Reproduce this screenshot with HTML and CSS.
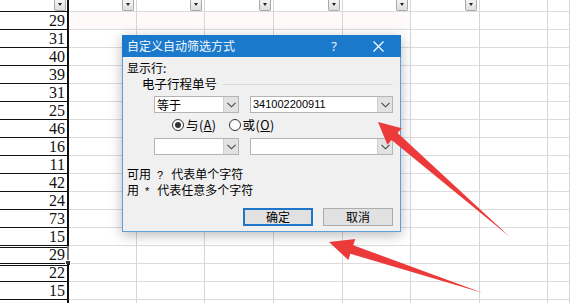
FILE: index.html
```html
<!DOCTYPE html>
<html lang="zh-CN">
<head>
<meta charset="utf-8">
<title>自定义自动筛选方式</title>
<link rel="stylesheet" href="styles.css">
</head>
<body>
<div class="sheet">
  <div class="row head">
    <div class="c n"><span class="fb"></span></div><div class="c"><span class="fb"></span></div><div class="c"><span class="fb"></span></div><div class="c"><span class="fb"></span></div><div class="c"><span class="fb"></span></div><div class="c"><span class="fb"></span></div><div class="c"><span class="fb"></span></div><div class="c"></div><div class="c"></div>
  </div>
  <div class="row"><div class="c n">29</div><div class="c tint"></div><div class="c tint"></div><div class="c tint"></div><div class="c tint"></div><div class="c tint"></div><div class="c"></div><div class="c"></div><div class="c"></div></div>
  <div class="row"><div class="c n">31</div><div class="c"></div><div class="c"></div><div class="c"></div><div class="c"></div><div class="c"></div><div class="c"></div><div class="c"></div><div class="c"></div></div>
  <div class="row"><div class="c n">40</div><div class="c"></div><div class="c"></div><div class="c"></div><div class="c"></div><div class="c"></div><div class="c"></div><div class="c"></div><div class="c"></div></div>
  <div class="row"><div class="c n">39</div><div class="c"></div><div class="c"></div><div class="c"></div><div class="c"></div><div class="c"></div><div class="c"></div><div class="c"></div><div class="c"></div></div>
  <div class="row"><div class="c n">31</div><div class="c"></div><div class="c"></div><div class="c"></div><div class="c"></div><div class="c"></div><div class="c"></div><div class="c"></div><div class="c"></div></div>
  <div class="row"><div class="c n">25</div><div class="c"></div><div class="c"></div><div class="c"></div><div class="c"></div><div class="c"></div><div class="c"></div><div class="c"></div><div class="c"></div></div>
  <div class="row"><div class="c n">46</div><div class="c"></div><div class="c"></div><div class="c"></div><div class="c"></div><div class="c"></div><div class="c"></div><div class="c"></div><div class="c"></div></div>
  <div class="row"><div class="c n">16</div><div class="c"></div><div class="c"></div><div class="c"></div><div class="c"></div><div class="c"></div><div class="c"></div><div class="c"></div><div class="c"></div></div>
  <div class="row"><div class="c n">11</div><div class="c"></div><div class="c"></div><div class="c"></div><div class="c"></div><div class="c"></div><div class="c"></div><div class="c"></div><div class="c"></div></div>
  <div class="row"><div class="c n">42</div><div class="c"></div><div class="c"></div><div class="c"></div><div class="c"></div><div class="c"></div><div class="c"></div><div class="c"></div><div class="c"></div></div>
  <div class="row"><div class="c n">24</div><div class="c"></div><div class="c"></div><div class="c"></div><div class="c"></div><div class="c"></div><div class="c"></div><div class="c"></div><div class="c"></div></div>
  <div class="row"><div class="c n">73</div><div class="c"></div><div class="c"></div><div class="c"></div><div class="c"></div><div class="c"></div><div class="c"></div><div class="c"></div><div class="c"></div></div>
  <div class="row"><div class="c n">15</div><div class="c"></div><div class="c"></div><div class="c"></div><div class="c"></div><div class="c"></div><div class="c"></div><div class="c"></div><div class="c"></div></div>
  <div class="row"><div class="c n sel">29<span class="handle"></span></div><div class="c"></div><div class="c"></div><div class="c"></div><div class="c"></div><div class="c"></div><div class="c"></div><div class="c"></div><div class="c"></div></div>
  <div class="row"><div class="c n after">22</div><div class="c"></div><div class="c"></div><div class="c"></div><div class="c"></div><div class="c"></div><div class="c"></div><div class="c"></div><div class="c"></div></div>
  <div class="row"><div class="c n">15</div><div class="c"></div><div class="c"></div><div class="c"></div><div class="c"></div><div class="c"></div><div class="c"></div><div class="c"></div><div class="c"></div></div>
  <div class="row"><div class="c n"></div><div class="c"></div><div class="c"></div><div class="c"></div><div class="c"></div><div class="c"></div><div class="c"></div><div class="c"></div><div class="c"></div></div>
</div>

<div class="dlg">
  <div class="dlg-title">
    <span class="dlg-caption">自定义自动筛选方式</span>
    <span class="cap-btn">?</span>
    <span class="cap-btn">
      <svg width="11" height="11" viewBox="0 0 11 11"><path d="M0.5 0.5 L10.5 10.5 M10.5 0.5 L0.5 10.5" stroke="#fff" stroke-width="1.2" fill="none"/></svg>
    </span>
  </div>
  <div class="dlg-body">
    <div class="line">显示行:</div>
    <div class="group"><span class="group-label">电子行程单号</span><span class="group-rule"></span></div>
    <div class="crit">
      <div class="combo op"><span class="combo-text">等于</span><span class="drop"><svg width="9" height="6" viewBox="0 0 9 6"><path d="M0.5 0.8 L4.5 4.8 L8.5 0.8" stroke="#444" stroke-width="1.1" fill="none"/></svg></span></div>
      <div class="combo val"><span class="combo-text">341002200911</span><span class="drop"><svg width="9" height="6" viewBox="0 0 9 6"><path d="M0.5 0.8 L4.5 4.8 L8.5 0.8" stroke="#444" stroke-width="1.1" fill="none"/></svg></span></div>
    </div>
    <div class="radios">
      <span class="radio on"></span><span class="rlabel">与(<u>A</u>)</span>
      <span class="radio"></span><span class="rlabel">或(<u>O</u>)</span>
    </div>
    <div class="crit second">
      <div class="combo op"><span class="combo-text"></span><span class="drop"><svg width="9" height="6" viewBox="0 0 9 6"><path d="M0.5 0.8 L4.5 4.8 L8.5 0.8" stroke="#444" stroke-width="1.1" fill="none"/></svg></span></div>
      <div class="combo val"><span class="combo-text"></span><span class="drop"><svg width="9" height="6" viewBox="0 0 9 6"><path d="M0.5 0.8 L4.5 4.8 L8.5 0.8" stroke="#444" stroke-width="1.1" fill="none"/></svg></span></div>
    </div>
    <div class="hint first">可用<span class="wc">?</span>代表单个字符</div>
    <div class="hint">用<span class="wc">*</span>代表任意多个字符</div>
    <div class="actions">
      <button class="btn default">确定</button>
      <button class="btn">取消</button>
    </div>
  </div>
</div>

<svg class="arrows" width="570" height="303" viewBox="0 0 570 303">
  <polygon fill="#ec3a3a" points="378,122 401.8,128.3 397.6,133.1 510,237 391.6,139.9 387.4,144.8"/>
  <polygon fill="#ec3a3a" points="329,242 355.3,239.1 353.2,245.2 483,293 350.4,253.8 348.3,260"/>
</svg>
</body>
</html>
```

FILE: styles.css
```css
html, body {
  margin: 0;
  padding: 0;
  background: #fff;
  width: 570px;
  height: 303px;
  overflow: hidden;
  position: relative;
}

.sheet {
  display: flex;
  flex-direction: column;
}

.row {
  display: grid;
  grid-template-columns: 69px 68px 68px 69px 69px 68px 69px 68px 1fr;
  height: 18px;
}

.row.head {
  height: 12px;
}

.c {
  box-sizing: border-box;
  border-right: 1px solid #d6d6d6;
  border-bottom: 1px solid #dcdcdc;
  display: flex;
  align-items: flex-end;
  justify-content: flex-end;
}

.c.tint {
  background: #fefafa;
}

.c.n {
  position: relative;
  border-right: 2px solid #111;
  border-bottom: 1px solid #111;
  font-family: "Liberation Serif", "DejaVu Serif", serif;
  font-size: 16px;
  line-height: 17px;
  color: #111;
  padding-right: 2px;
  align-items: center;
}

.c.n.sel {
  box-shadow: inset 0 1px 0 #fff, inset 0 2px 0 #111;
  border-right-color: #777;
}

.c.n.after {
  box-shadow: inset 0 1px 0 #fff, inset 0 2px 0 #111;
}

.handle {
  position: absolute;
  right: -4px;
  bottom: -3px;
  width: 4px;
  height: 4px;
  background: #333;
  border: 1px solid #fff;
}

.head .c {
  align-items: flex-start;
}

.head .c.n {
  align-items: flex-start;
  padding-right: 0;
}

.fb {
  box-sizing: border-box;
  width: 12px;
  height: 11px;
  margin-right: 2px;
  border: 1px solid #a9a9a9;
  border-top: none;
  border-radius: 0 0 2px 2px;
  background: linear-gradient(#f4f4f4, #dedede);
  position: relative;
}

.c.n .fb {
  margin-right: 1px;
}

.fb::after {
  content: "";
  position: absolute;
  left: 3px;
  top: 3px;
  border-left: 2.5px solid transparent;
  border-right: 2.5px solid transparent;
  border-top: 3px solid #222;
}

/* Dialog */
.dlg {
  position: absolute;
  left: 122px;
  top: 35px;
  width: 279px;
  height: 197px;
  display: flex;
  flex-direction: column;
  box-shadow: 0 3px 12px rgba(0, 0, 0, 0.28);
  font-family: "Noto Sans CJK SC", "Noto Sans", sans-serif;
  font-size: 12px;
  color: #000;
}

.dlg-title {
  height: 22px;
  background: #1b79cc;
  color: #fff;
  display: flex;
  align-items: center;
  flex-shrink: 0;
}

.dlg-caption {
  flex: 1;
  padding-left: 5px;
  font-size: 12px;
  line-height: 22px;
  color: #f4f8fc;
}

.cap-btn {
  width: 44px;
  height: 22px;
  display: flex;
  align-items: center;
  justify-content: center;
  font-family: "Noto Sans", sans-serif;
  font-size: 13px;
  color: #e8f1fa;
}

.cap-btn:last-child {
  margin-right: 1px;
}

.dlg-body {
  flex: 1;
  box-sizing: border-box;
  background: #f0f0f0;
  border: 1px solid #5f9fd9;
  border-top: none;
  padding: 3px 7px 0 4px;
  display: flex;
  flex-direction: column;
}

.line {
  height: 16px;
  line-height: 16px;
}

.group {
  height: 16px;
  line-height: 16px;
  display: flex;
  align-items: center;
  padding-left: 15px;
}

.group-label {
  font-size: 12.5px;
}

.group-rule {
  flex: 1;
  height: 1px;
  background: #dcdcdc;
  margin-left: 6px;
}

.crit {
  margin-top: 4px;
  height: 17px;
  display: flex;
  gap: 11px;
  padding-left: 27px;
}

.crit.second {
  margin-top: 5px;
}

.combo {
  box-sizing: border-box;
  height: 17px;
  background: #fff;
  border: 1px solid #b4b4b4;
  display: flex;
  align-items: stretch;
}

.combo.op {
  width: 85px;
}

.combo.val {
  width: 143px;
}

.combo-text {
  flex: 1;
  padding-left: 2px;
  line-height: 15px;
  font-size: 12px;
}

.combo.val .combo-text {
  font-family: "Liberation Sans", Arial, sans-serif;
  font-size: 11px;
}

.drop {
  width: 14px;
  background: #e2e2e2;
  border-left: 1px solid #cfcfcf;
  display: flex;
  align-items: center;
  justify-content: center;
}

.radios {
  margin-top: 3px;
  height: 17px;
  display: flex;
  align-items: center;
  padding-left: 45px;
}

.radio {
  box-sizing: border-box;
  width: 12px;
  height: 12px;
  border: 1px solid #333;
  border-radius: 50%;
  background: #fff;
  display: flex;
  align-items: center;
  justify-content: center;
}

.radio.on::after {
  content: "";
  width: 6px;
  height: 6px;
  border-radius: 50%;
  background: #333;
}

.rlabel {
  margin-left: 2px;
  margin-right: 12px;
  line-height: 17px;
  font-size: 12.5px;
  letter-spacing: 0.5px;
}

.hint {
  height: 16px;
  line-height: 16px;
}

.hint.first {
  margin-top: 11px;
}

.wc {
  display: inline-block;
  margin: 0 8px 0 6px;
  font-family: "Liberation Sans", sans-serif;
  font-size: 11px;
}

.actions {
  margin-top: 10px;
  display: flex;
  justify-content: flex-end;
  gap: 10px;
}

.btn {
  box-sizing: border-box;
  width: 70px;
  height: 18px;
  padding: 0;
  margin: 0;
  background: #e1e1e1;
  border: 1px solid #adadad;
  font-family: "Noto Sans CJK SC", sans-serif;
  font-size: 12px;
  line-height: 16px;
  color: #000;
}

.btn.default {
  border: 2px solid #1e76c8;
  line-height: 14px;
}

.arrows {
  position: absolute;
  left: 0;
  top: 0;
}
```
